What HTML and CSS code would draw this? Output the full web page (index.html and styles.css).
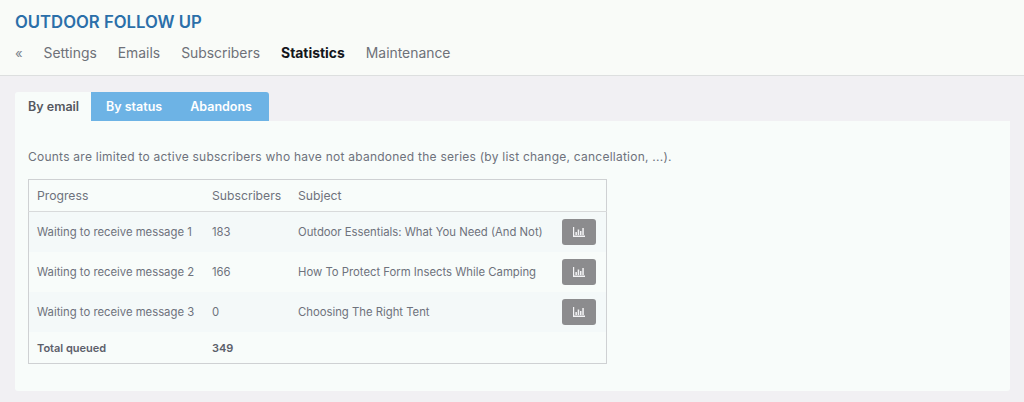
FILE: index.html
```html
<!DOCTYPE html>
<html lang="en">
<head>
    <meta charset="UTF-8">
    <meta name="viewport" content="width=device-width, initial-scale=1.0">
    <title>Outdoor Follow Up</title>
    <link rel="stylesheet" href="styles.css">
</head>
<body>
    <!-- Page header -->
    <header class="page-header">
        <h1>OUTDOOR FOLLOW UP</h1>
        <nav class="main-nav">
            <a class="back" href="#">«</a>
            <a href="#">Settings</a>
            <a href="#">Emails</a>
            <a href="#">Subscribers</a>
            <a class="active" href="#">Statistics</a>
            <a href="#">Maintenance</a>
        </nav>
    </header>

    <main class="content">
        <!-- Tabs -->
        <div class="tabs">
            <a class="tab active" href="#">By email</a>
            <div class="tab-group">
                <a class="tab" href="#">By status</a>
                <a class="tab" href="#">Abandons</a>
            </div>
        </div>

        <!-- Stats card -->
        <section class="card">
            <p class="note">Counts are limited to active subscribers who have not abandoned the series (by list change, cancellation, ...).</p>
            <table class="stats">
                <thead>
                    <tr>
                        <th class="col-progress">Progress</th>
                        <th class="col-subs">Subscribers</th>
                        <th class="col-subject">Subject</th>
                        <th></th>
                    </tr>
                </thead>
                <tbody>
                    <tr>
                        <td>Waiting to receive message 1</td>
                        <td>183</td>
                        <td>Outdoor Essentials: What You Need (And Not)</td>
                        <td class="col-action"><button class="stat-button" aria-label="Statistics"><svg viewBox="0 0 12 10"><path d="M0 0h1.2v8.6H12V10H0z"/><path d="M2.4 5h1.5v3H2.4zM4.7 2.6h1.5V8H4.7zM7 4h1.5v4H7zM9.3 1h1.5v7H9.3z"/></svg></button></td>
                    </tr>
                    <tr>
                        <td>Waiting to receive message 2</td>
                        <td>166</td>
                        <td>How To Protect Form Insects While Camping</td>
                        <td class="col-action"><button class="stat-button" aria-label="Statistics"><svg viewBox="0 0 12 10"><path d="M0 0h1.2v8.6H12V10H0z"/><path d="M2.4 5h1.5v3H2.4zM4.7 2.6h1.5V8H4.7zM7 4h1.5v4H7zM9.3 1h1.5v7H9.3z"/></svg></button></td>
                    </tr>
                    <tr>
                        <td>Waiting to receive message 3</td>
                        <td>0</td>
                        <td>Choosing The Right Tent</td>
                        <td class="col-action"><button class="stat-button" aria-label="Statistics"><svg viewBox="0 0 12 10"><path d="M0 0h1.2v8.6H12V10H0z"/><path d="M2.4 5h1.5v3H2.4zM4.7 2.6h1.5V8H4.7zM7 4h1.5v4H7zM9.3 1h1.5v7H9.3z"/></svg></button></td>
                    </tr>
                </tbody>
                <tfoot>
                    <tr>
                        <td>Total queued</td>
                        <td>349</td>
                        <td></td>
                        <td></td>
                    </tr>
                </tfoot>
            </table>
        </section>
    </main>
</body>
</html>
```

FILE: styles.css
```css
/* Body and general settings */
body {
    margin: 0;
    background-color: #f1f0f3;
    color: #6e727c;
    font-family: Inter, "Noto Sans", sans-serif;
    font-size: 11px;
    overflow: hidden;
}

a {
    text-decoration: none;
    color: inherit;
}

/* Page header */
.page-header {
    height: 76px;
    box-sizing: border-box;
    padding: 13px 15px 0;
    background-color: #f9fbf8;
    border-bottom: 1px solid #dddfdf;
}

h1 {
    margin: 0;
    font-size: 16.7px;
    line-height: 19px;
    font-weight: 600;
    color: #2b6fa9;
}

.main-nav {
    display: flex;
    gap: 21px;
    margin-top: 13px;
    font-size: 13.9px;
    line-height: 17px;
    color: #6e7178;
}

.main-nav .back {
    color: #7a828c;
    font-size: 13px;
}

.main-nav .active {
    color: #14161c;
    font-weight: 700;
}

/* Tabs */
.content {
    padding: 16px 14px 0 15px;
}

.tabs {
    display: flex;
    height: 29px;
}

.tab {
    display: block;
    padding: 0 14px 0 15px;
    font-size: 12.5px;
    line-height: 29px;
    font-weight: 600;
    color: #fff;
    white-space: nowrap;
}

.tab + .tab {
    padding: 0 16px 0 14px;
}

.tab.active {
    width: 76px;
    box-sizing: border-box;
    padding: 0 0 0 13px;
    background-color: #f8fcfa;
    color: #55585f;
    border-radius: 3px 0 0 0;
}

.tab-group {
    display: flex;
    padding-right: 1px;
    background-color: #6db3e5;
    border-radius: 0 3px 0 0;
}

/* Card */
.card {
    height: 270px;
    box-sizing: border-box;
    padding: 29px 13px 0;
    background-color: #f8fcfa;
    border-radius: 0 0 3px 3px;
}

.note {
    margin: 0 0 15px;
    font-size: 12px;
    letter-spacing: 0.24px;
    line-height: 14px;
}

/* Table */
.stats {
    width: 579px;
    height: 184px;
    border-collapse: collapse;
    border: 1px solid #cfd1d3;
    table-layout: fixed;
}

.stats th,
.stats td {
    padding: 0 0 0 8px;
    text-align: left;
    font-size: 11.3px;
    font-weight: 400;
}

.stats th {
    font-size: 12.2px;
}

.stats thead tr {
    height: 32px;
    border-bottom: 1px solid #d8dadb;
}

.stats tbody tr {
    height: 40px;
}

.stats tbody tr:nth-child(odd) {
    background-color: #f4f9f9;
}

.stats tfoot td {
    height: 30px;
    padding-top: 1px;
    font-weight: 600;
    color: #5c606a;
    font-size: 11px;
}

/* widths are content widths, the 8px cell padding comes on top */
.col-progress {
    width: 167px;
}

.col-subs {
    width: 78px;
}

.col-subject {
    width: 264px;
}

.stats td.col-action {
    padding: 0;
}

.stat-button {
    display: flex;
    align-items: center;
    justify-content: center;
    width: 34px;
    height: 26px;
    padding: 0;
    border: none;
    border-radius: 3px;
    background-color: #8c8c8e;
    cursor: pointer;
}

.stat-button svg {
    width: 12px;
    height: 10px;
    fill: #f4f4f6;
}
```
